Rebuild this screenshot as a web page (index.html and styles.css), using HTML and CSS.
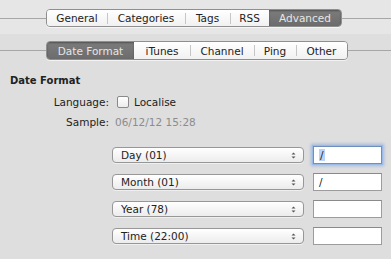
FILE: index.html
```html
<!DOCTYPE html>
<html lang="en">

<head>
  <meta charset="UTF-8">
  <title>Preferences</title>
  <link rel="stylesheet" href="styles.css">
</head>

<body>
  <div class="toolbar">
    <div class="seg-row">
      <span class="rule lead"></span>
      <div class="seg">
        <span class="seg-item w-general">General</span>
        <span class="seg-item w-categories">Categories</span>
        <span class="seg-item w-tags">Tags</span>
        <span class="seg-item w-rss">RSS</span>
        <span class="seg-item w-advanced selected">Advanced</span>
      </div>
      <span class="rule"></span>
    </div>
  </div>

  <div class="pane">
    <div class="seg-row">
      <span class="rule lead"></span>
      <div class="seg">
        <span class="seg-item w-date selected">Date Format</span>
        <span class="seg-item w-itunes">iTunes</span>
        <span class="seg-item w-channel">Channel</span>
        <span class="seg-item w-ping">Ping</span>
        <span class="seg-item w-other">Other</span>
      </div>
      <span class="rule"></span>
    </div>

    <h2>Date Format</h2>

    <div class="form">
      <span class="label">Language:</span>
      <label class="check"><span class="box"></span>Localise</label>
      <span class="label">Sample:</span>
      <span class="sample">06/12/12 15:28</span>
    </div>

    <div class="parts">
      <div class="popup"><span>Day (01)</span><svg width="5" height="7" viewBox="0 0 5 7"><path d="M0.5 2.5 L2.5 0.5 L4.5 2.5 Z M0.5 4.5 L2.5 6.5 L4.5 4.5 Z" fill="#555"/></svg></div>
      <div class="field focused"><span class="sel">/</span></div>

      <div class="popup"><span>Month (01)</span><svg width="5" height="7" viewBox="0 0 5 7"><path d="M0.5 2.5 L2.5 0.5 L4.5 2.5 Z M0.5 4.5 L2.5 6.5 L4.5 4.5 Z" fill="#555"/></svg></div>
      <div class="field">/</div>

      <div class="popup"><span>Year (78)</span><svg width="5" height="7" viewBox="0 0 5 7"><path d="M0.5 2.5 L2.5 0.5 L4.5 2.5 Z M0.5 4.5 L2.5 6.5 L4.5 4.5 Z" fill="#555"/></svg></div>
      <div class="field"></div>

      <div class="popup"><span>Time (22:00)</span><svg width="5" height="7" viewBox="0 0 5 7"><path d="M0.5 2.5 L2.5 0.5 L4.5 2.5 Z M0.5 4.5 L2.5 6.5 L4.5 4.5 Z" fill="#555"/></svg></div>
      <div class="field"></div>
    </div>
  </div>
</body>

</html>
```

FILE: styles.css
```css
body {
  margin: 0;
  width: 391px;
  height: 259px;
  overflow: hidden;
  font-family: "DejaVu Sans", sans-serif;
  font-size: 10.5px;
  color: #222;
  background-color: #dedede;
}

.toolbar {
  background-color: #e6e6e6;
  padding: 9px 0 7px;
}

.pane {
  padding-top: 7px;
}

.seg-row {
  display: flex;
  align-items: center;
}

.rule {
  flex: 1;
  height: 1px;
  background-color: #a6a6a6;
}

.rule.lead {
  flex: 0 0 46px;
}

.seg {
  display: flex;
  border: 1px solid #8f8f8f;
  border-radius: 4px;
  overflow: hidden;
  box-shadow: 0 1px 0 rgba(255, 255, 255, 0.6);
}

.toolbar .seg-item {
  height: 16px;
}

.seg-item {
  height: 17px;
  display: flex;
  align-items: center;
  justify-content: center;
  background: linear-gradient(#c6c6c6, #c6c6c6) left center / 1px 11px no-repeat,
    linear-gradient(#ffffff, #f1f1f1);
}

.seg-item:first-child {
  background: linear-gradient(#ffffff, #f1f1f1);
}

.seg-item.selected {
  background: linear-gradient(#7c7c7c, #6c6c6c);
  color: #e6e6e6;
  box-shadow: inset 0 1px 2px rgba(0, 0, 0, 0.35);
}

.seg-item.selected + .seg-item {
  background: linear-gradient(#ffffff, #f1f1f1);
}

.w-general { width: 60px; }
.w-categories { width: 78px; }
.w-tags { width: 45px; }
.w-rss { width: 39px; }
.w-advanced { width: 72px; }

.w-date { width: 87px; }
.w-itunes { width: 56px; }
.w-channel { width: 64px; }
.w-ping { width: 42px; }
.w-other { width: 51px; }

h2 {
  font-size: 10px;
  font-weight: bold;
  margin: 15px 0 0 10px;
  line-height: 12px;
}

.form {
  display: grid;
  grid-template-columns: 99px auto;
  column-gap: 6px;
  row-gap: 8px;
  margin: 9px 0 0 10px;
  line-height: 12px;
  align-items: center;
}

.label {
  text-align: right;
}

.check {
  display: flex;
  align-items: center;
  gap: 5px;
}

.box {
  width: 10px;
  height: 10px;
  margin-left: 2px;
  border: 1px solid #8a8a8a;
  border-radius: 2px;
  background: linear-gradient(#ffffff, #ececec);
}

.sample {
  color: #8c8c8c;
}

.parts {
  display: grid;
  grid-template-columns: 192px 69px;
  column-gap: 9px;
  row-gap: 9px;
  margin: 18px 0 0 112px;
  align-items: center;
}

.popup {
  height: 14px;
  border: 1px solid #979797;
  border-radius: 4px;
  background: linear-gradient(#ffffff, #ececec);
  box-shadow: 0 1px 0 rgba(255, 255, 255, 0.5);
  display: flex;
  align-items: center;
  justify-content: space-between;
  padding: 0 7px 0 8px;
}

.field {
  border: 1px solid #9c9c9c;
  border-top-color: #8a8a8a;
  background-color: #fff;
  display: flex;
  align-items: center;
  padding-left: 5px;
  box-sizing: border-box;
  height: 18px;
}

.field.focused {
  border-color: #6f8fc0;
  box-shadow: 0 0 0 1px #9bbbe6, 0 0 3px 2px rgba(120, 160, 220, 0.6);
}

.sel {
  background-color: #b6d3fb;
  padding: 0 1px;
}
```
